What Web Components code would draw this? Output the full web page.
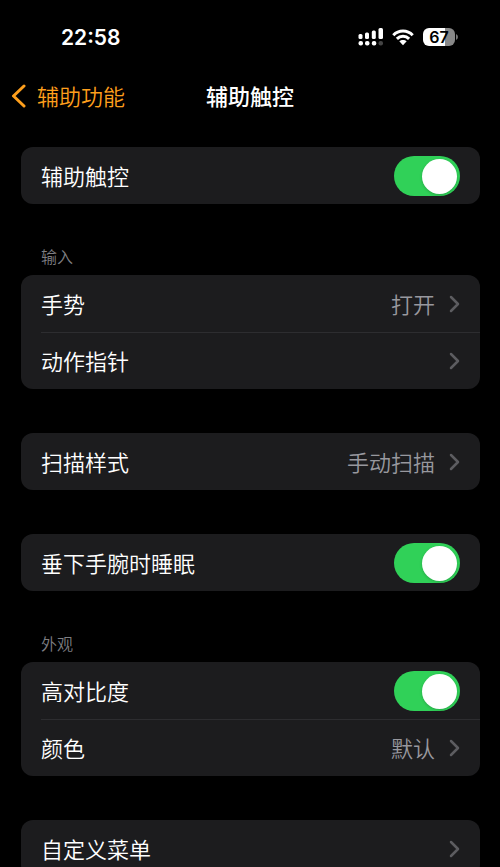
<!DOCTYPE html>
<html lang="zh-CN">
<head>
<meta charset="utf-8">
<meta name="viewport" content="width=device-width, initial-scale=1">
<title>辅助触控</title>
<style>
  html { background: #000; scrollbar-width: none; }
  body {
    margin: 0;
    color: #fff;
    font-family: "Noto Sans CJK SC", sans-serif;
    font-size: 22px;
    line-height: 32px;
    font-weight: 350;
  }
</style>
</head>
<body>
<settings-page>
  <status-bar slot="status" time="22:58" battery="67"></status-bar>
  <nav-header slot="nav" back="辅助功能">辅助触控</nav-header>
  <settings-group>
    <toggle-row label="辅助触控"></toggle-row>
  </settings-group>
  <settings-group heading="输入">
    <link-row label="手势" value="打开"></link-row>
    <link-row label="动作指针"></link-row>
  </settings-group>
  <settings-group>
    <link-row label="扫描样式" value="手动扫描"></link-row>
  </settings-group>
  <settings-group>
    <toggle-row label="垂下手腕时睡眠"></toggle-row>
  </settings-group>
  <settings-group heading="外观">
    <toggle-row label="高对比度"></toggle-row>
    <link-row label="颜色" value="默认"></link-row>
  </settings-group>
  <settings-group>
    <link-row label="自定义菜单"></link-row>
  </settings-group>
</settings-page>

<script>
class BaseElement extends HTMLElement {
  connectedCallback() {
    if (this.shadowRoot) return;
    this.attachShadow({ mode: "open" }).innerHTML = this.render();
  }
}

customElements.define("settings-page", class extends BaseElement {
  render() {
    return `
      <style>
        :host { display: block; }
        main { display: flex; flex-direction: column; gap: 44px; padding: 29px 20px 44px 21px; }
      </style>
      <slot name="status"></slot>
      <slot name="nav"></slot>
      <main><slot></slot></main>`;
  }
});

customElements.define("status-bar", class extends BaseElement {
  render() {
    return `
      <style>
        :host { display: flex; align-items: center; justify-content: space-between; height: 74px; padding: 0 42px 0 61px; box-sizing: border-box; }
        time { padding-top: 2px; font: 600 21px/32px Inter, sans-serif; }
        .icons { display: flex; align-items: center; gap: 9px; }
        svg { display: block; }
        text { font: 600 16px Inter, sans-serif; }
      </style>
      <time>${this.getAttribute("time")}</time>
      <div class="icons">
        <svg width="25" height="18" viewBox="0 0 25 18" fill="#fff" role="img" aria-label="信号">
          <rect x="0.500" y="6" width="4" height="5" rx="1.500"/>
          <rect x="7" y="4.500" width="4" height="6.500" rx="1.500"/>
          <rect x="13.800" y="2.500" width="4" height="8.500" rx="1.500"/>
          <rect x="20.500" y="0" width="4.500" height="11" rx="1.500"/>
          <rect x="0.500" y="13" width="4.500" height="4.500" rx="2"/>
          <rect x="7" y="13" width="4.500" height="4.500" rx="2"/>
          <rect x="13.800" y="13" width="4.500" height="4.500" rx="2"/>
          <rect x="20.500" y="13" width="4.500" height="4.500" rx="2" fill="#444"/>
        </svg>
        <svg width="22" height="17" viewBox="0 0 22 17" role="img" aria-label="无线局域网">
          <path d="M1.300 6.200C6.700.600 15.300.600 20.700 6.200M4.900 9.900C8.300 6.400 13.700 6.400 17.100 9.900" fill="none" stroke="#fff" stroke-width="3"/>
          <path d="M7.300 12.300C9.400 10.400 12.600 10.400 14.700 12.300L11 16.200Z" fill="#fff"/>
        </svg>
        <svg width="35" height="18" viewBox="0 0 35 18" role="img" aria-label="电池">
          <path d="M6 0H22V18H6A6 6 0 0 1 0 12V6A6 6 0 0 1 6 0Z" fill="#fff"/>
          <path d="M22 0H26A6 6 0 0 1 32 6V12A6 6 0 0 1 26 18H22Z" fill="#888"/>
          <path d="M33 6Q35 7 35 9T33 12Z" fill="#777"/>
          <text x="16" y="15" text-anchor="middle" fill="#000">${this.getAttribute("battery")}</text>
        </svg>
      </div>`;
  }
});

customElements.define("nav-header", class extends BaseElement {
  render() {
    return `
      <style>
        :host { display: grid; grid-template-columns: 1fr auto 1fr; align-items: center; height: 44px; padding: 0 11px; }
        a { display: flex; align-items: center; gap: 11px; color: #fe9f1c; text-decoration: none; }
        h1 { margin: 0; font-size: 22px; line-height: 32px; font-weight: 500; }
        h1, span { padding-bottom: 2px; }
        svg { display: block; }
      </style>
      <a href="#back">
        <svg width="15" height="24" viewBox="0 0 15 24" fill="none" stroke="currentColor" stroke-width="3" stroke-linecap="round" stroke-linejoin="round" aria-hidden="true"><path d="M13 2 2.500 12 13 22"/></svg>
        <span>${this.getAttribute("back")}</span>
      </a>
      <h1><slot></slot></h1>`;
  }
});

customElements.define("settings-group", class extends BaseElement {
  render() {
    const heading = this.getAttribute("heading");
    return `
      <style>
        :host { display: block; }
        h2 { margin: 0; padding: 0 20px 11px; font-size: 16px; line-height: 16px; font-weight: inherit; color: #7e7e82; }
        .card { background: #1c1c1e; border-radius: 12px; overflow: hidden; }
        ::slotted(:not(:first-child)) { --divider: #2d2d30; }
      </style>
      ${heading ? `<h2>${heading}</h2>` : ""}
      <div class="card"><slot></slot></div>`;
  }
});

const rowStyle = `
  :host { display: block; padding-left: 20px; }
  .row {
    display: flex; align-items: center; justify-content: space-between;
    min-height: 57px; padding-right: 20px; box-sizing: border-box;
    border-top: 1px solid var(--divider, transparent);
    color: #fff; text-decoration: none;
  }
  .text { padding-bottom: 2px; }`;

customElements.define("toggle-row", class extends BaseElement {
  render() {
    return `
      <style>
        ${rowStyle}
        input {
          appearance: none; display: flex; align-items: center; justify-content: flex-end;
          width: 66px; height: 40px; margin: 0; padding: 0 3px; box-sizing: border-box;
          border-radius: 20px; background: #39393d;
        }
        input:not(:checked) { justify-content: flex-start; }
        input:checked { background: #30d158; }
        input::before { content: ""; width: 35px; height: 35px; border-radius: 50%; background: #fff; box-shadow: 0 1px 3px #0003; }
      </style>
      <label class="row"><span class="text">${this.getAttribute("label")}</span><input type="checkbox" role="switch" checked></label>`;
  }
});

customElements.define("link-row", class extends BaseElement {
  render() {
    return `
      <style>
        ${rowStyle}
        .value { display: flex; align-items: center; gap: 14px; color: #98989e; }
        svg { display: block; color: #5c5c60; }
      </style>
      <a class="row" href="#detail">
        <span class="text">${this.getAttribute("label")}</span>
        <span class="value"><span class="text">${this.getAttribute("value") || ""}</span>
          <svg width="11" height="18" viewBox="0 0 11 18" fill="none" stroke="currentColor" stroke-width="2.500" stroke-linecap="round" stroke-linejoin="round" aria-hidden="true"><path d="M2 2 9 9 2 16"/></svg>
        </span>
      </a>`;
  }
});
</script>
</body>
</html>
